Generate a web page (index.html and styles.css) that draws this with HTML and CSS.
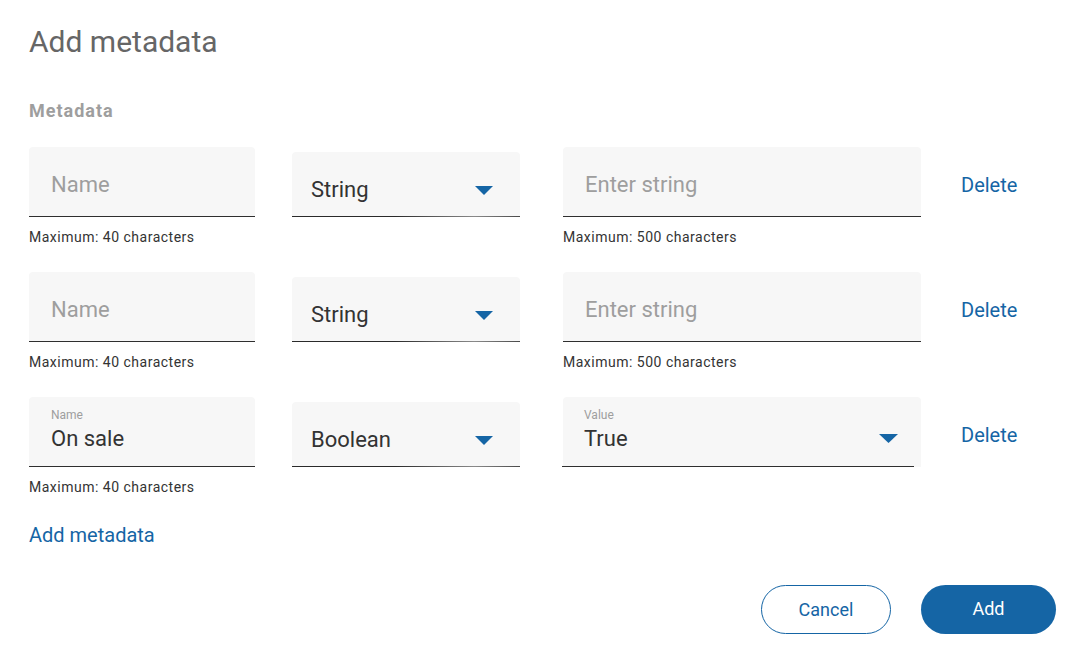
FILE: index.html
```html
<!DOCTYPE html>
<html lang="en">
<head>
<meta charset="utf-8">
<title>Add metadata</title>
<link rel="stylesheet" href="styles.css">
</head>
<body>
<div class="dialog">
  <h1 class="title">Add metadata</h1>
  <h2 class="section">Metadata</h2>

  <div class="row">
    <div class="col-name">
      <div class="field"><span class="placeholder">Name</span></div>
      <div class="helper">Maximum: 40 characters</div>
    </div>
    <div class="select">
      <span class="sel-text">String</span>
      <svg class="arrow" width="18" height="9" viewBox="0 0 18 9"><path d="M0 0H18L9 9Z" fill="#1565a5"/></svg>
    </div>
    <div class="col-value">
      <div class="field"><span class="placeholder">Enter string</span></div>
      <div class="helper">Maximum: 500 characters</div>
    </div>
    <a class="delete">Delete</a>
  </div>

  <div class="row">
    <div class="col-name">
      <div class="field"><span class="placeholder">Name</span></div>
      <div class="helper">Maximum: 40 characters</div>
    </div>
    <div class="select">
      <span class="sel-text">String</span>
      <svg class="arrow" width="18" height="9" viewBox="0 0 18 9"><path d="M0 0H18L9 9Z" fill="#1565a5"/></svg>
    </div>
    <div class="col-value">
      <div class="field"><span class="placeholder">Enter string</span></div>
      <div class="helper">Maximum: 500 characters</div>
    </div>
    <a class="delete">Delete</a>
  </div>

  <div class="row">
    <div class="col-name">
      <div class="field filled">
        <span class="label">Name</span>
        <span class="value">On sale</span>
      </div>
      <div class="helper">Maximum: 40 characters</div>
    </div>
    <div class="select">
      <span class="sel-text">Boolean</span>
      <svg class="arrow" width="18" height="9" viewBox="0 0 18 9"><path d="M0 0H18L9 9Z" fill="#1565a5"/></svg>
    </div>
    <div class="col-value">
      <div class="field value-select">
        <div class="vs-inner">
          <div class="vs-text">
            <span class="label">Value</span>
            <span class="value">True</span>
          </div>
          <svg class="arrow" width="19" height="9" viewBox="0 0 19 9"><path d="M0 0H19L9.5 9Z" fill="#1565a5"/></svg>
        </div>
        <div class="vs-line"></div>
      </div>
    </div>
    <a class="delete">Delete</a>
  </div>

  <a class="add-link">Add metadata</a>

  <div class="actions">
    <button class="btn btn-outline">Cancel</button>
    <button class="btn btn-primary">Add</button>
  </div>
</div>
</body>
</html>
```

FILE: styles.css
```css
* { box-sizing: border-box; }
html, body { margin: 0; padding: 0; background: #fff; }
body {
  font-family: Roboto, "Noto Sans", Arial, sans-serif;
  width: 1080px;
  height: 652px;
  overflow: hidden;
}
.dialog {
  padding: 25px 24px 0 29px;
  display: flex;
  flex-direction: column;
}
.title {
  margin: 0;
  font-size: 30px;
  line-height: 34px;
  font-weight: 400;
  color: #666;
}
.section {
  margin: 41px 0 0;
  font-size: 18px;
  line-height: 21px;
  font-weight: 700;
  letter-spacing: 1px;
  color: #9e9e9e;
}
.row {
  display: flex;
  align-items: flex-start;
  margin-top: 26px;
}
.row + .row { margin-top: 27px; }
.col-name { width: 226px; flex: none; }
.col-value { width: 358px; flex: none; margin-left: 43px; }
.field {
  height: 70px;
  background: #f7f7f7;
  border-radius: 4px 4px 0 0;
  border-bottom: 1px solid #2f2f2f;
  padding: 25px 22px 0 22px;
  font-size: 22px;
  line-height: 26px;
  color: #333;
}
.placeholder { color: #9e9e9e; }
.field.filled {
  padding-top: 11px;
  display: flex;
  flex-direction: column;
}
.label {
  font-size: 12px;
  line-height: 14px;
  color: #9e9e9e;
}
.value {
  margin-top: 4px;
  font-size: 22px;
  line-height: 26px;
  color: #333;
}
.field.value-select {
  padding: 0;
  border-bottom: none;
  display: flex;
  flex-direction: column;
}
.vs-inner {
  flex: 1;
  display: flex;
  align-items: flex-start;
  justify-content: space-between;
  padding: 11px 23px 0 21px;
}
.vs-text { display: flex; flex-direction: column; }
.vs-inner .arrow { margin-top: 26px; }
.vs-line {
  height: 1px;
  margin: 0 7px 0 -1px;
  background: #2f2f2f;
}
.helper {
  margin-top: 12px;
  font-size: 14px;
  line-height: 16px;
  letter-spacing: 0.5px;
  color: #333;
}
.select {
  width: 228px;
  flex: none;
  margin-left: 37px;
  margin-top: 5px;
  height: 65px;
  background: #f7f7f7;
  border-radius: 4px 4px 0 0;
  padding: 25px 27px 0 19px;
  display: flex;
  align-items: flex-start;
  justify-content: space-between;
  position: relative;
  font-size: 22px;
  line-height: 26px;
  color: #333;
}
.select::after {
  content: "";
  position: absolute;
  left: 0;
  right: 0;
  bottom: 0;
  height: 1px;
  background: linear-gradient(90deg, #2a2a2a 0%, #2a2a2a 45%, #8a8a8a 80%, #4a4a4a 100%);
}
.select .arrow { margin-top: 9px; }
.delete {
  margin-left: 40px;
  margin-top: 26px;
  font-size: 20px;
  line-height: 24px;
  color: #1565a5;
  cursor: pointer;
}
.add-link {
  align-self: flex-start;
  margin-top: 28px;
  font-size: 20px;
  line-height: 24px;
  color: #1565a5;
  cursor: pointer;
}
.actions {
  margin-top: 38px;
  display: flex;
  justify-content: flex-end;
  gap: 30px;
}
.btn {
  height: 49px;
  border-radius: 25px;
  font-family: Roboto, "Noto Sans", Arial, sans-serif;
  font-size: 18px;
  line-height: 22px;
  cursor: pointer;
}
.btn-outline {
  width: 130px;
  background: #fff;
  border: 1.5px solid #1565a5;
  color: #1565a5;
  padding: 0;
}
.btn-primary {
  width: 135px;
  background: #1565a5;
  border: none;
  color: #fff;
  padding: 0 0 2px;
}
```
